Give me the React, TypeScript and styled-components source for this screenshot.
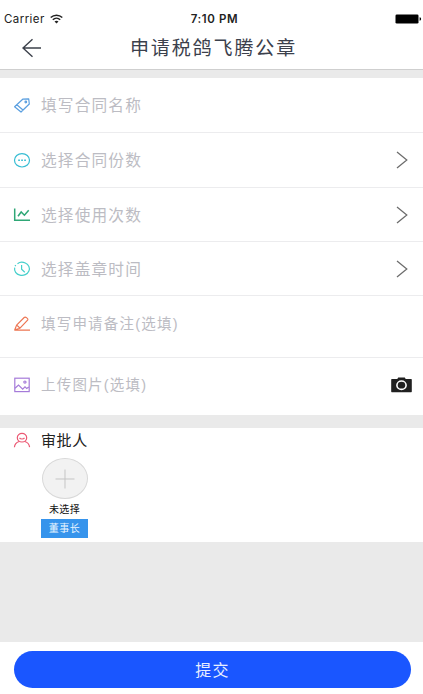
import React from "react";
import styled, { createGlobalStyle } from "styled-components";

const GlobalStyle = createGlobalStyle`
  * { box-sizing: border-box; }
  body { margin: 0; background: #eaeaea; font-family: "Liberation Sans", "Noto Sans CJK SC", sans-serif; }
`;

const Screen = styled.main`
  display: flex;
  flex-direction: column;
  width: 100%;
  height: 694px;
  overflow: hidden;
  background: #eaeaea;
`;

const Header = styled.header`
  height: 70px;
  flex: none;
  background: #fff;
  border-bottom: 1px solid #cfcfcf;
`;

const StatusBar = styled.div`
  display: grid;
  grid-template-columns: 1fr auto 1fr;
  align-items: center;
  height: 28px;
  padding: 9px 1px 0 4px;
  font-family: Inter, sans-serif;
  font-size: 11.5px;
  line-height: 18px;
  color: #222;
`;

const Carrier = styled.div`
  display: flex;
  align-items: center;
  gap: 5px;
  letter-spacing: 0.42px;
`;

const Clock = styled.div`
  font-weight: 600;
  letter-spacing: 0.6px;
  padding-left: 3px;
`;

const Battery = styled.svg`
  justify-self: end;
`;

const NavBar = styled.div`
  display: grid;
  grid-template-columns: 64px 1fr 64px;
  align-items: center;
  height: 40px;
`;

const BackButton = styled.button`
  display: flex;
  padding: 0 0 0 22px;
  border: 0;
  background: none;
`;

const Title = styled.h1`
  margin: 0;
  text-align: center;
  font-size: 19px;
  font-weight: 400;
  line-height: 28px;
  letter-spacing: 1.9px;
  padding: 1px 0 0 4px;
  color: #3b404c;
  white-space: nowrap;
`;

const FormCard = styled.section`
  flex: none;
  margin-top: 8px;
  background: #fff;
`;

const Row = styled.div<{ $height: number; $raise?: number }>`
  display: flex;
  align-items: center;
  height: ${(p) => p.$height}px;
  padding: 0 11px ${(p) => p.$raise ?? 0}px 14px;
  border-bottom: 1px solid #ececee;
  &:last-child { border-bottom: 0; }
`;

const Icon = styled.svg`
  flex: none;
  width: 16px;
  height: 16px;
  fill: none;
  stroke: currentColor;
  stroke-width: 1.2;
  overflow: visible;
`;

const Label = styled.span<{ $compact?: boolean }>`
  flex: 1;
  margin-left: 11px;
  padding-top: ${(p) => (p.$compact ? 0 : 2)}px;
  font-size: ${(p) => (p.$compact ? 14.5 : 15.7)}px;
  letter-spacing: ${(p) => (p.$compact ? 1.2 : 1.15)}px;
  line-height: 24px;
  color: #bcbcc3;
`;

const Chevron = styled.svg`
  margin-right: 4px;
  fill: none;
  stroke: #6c6c6c;
  stroke-width: 1.25;
`;

const ApproverCard = styled.section`
  flex: none;
  height: 114px;
  margin-top: 13px;
  padding-left: 14px;
  background: #fff;
`;

const ApproverHeading = styled.div`
  display: flex;
  align-items: center;
  height: 24px;
  gap: 11px;
  font-size: 15px;
  line-height: 22px;
  letter-spacing: 0.6px;
  color: #222;
`;

const ApproverTitle = styled.span`
  padding-top: 1px;
`;

const Approver = styled.div`
  display: flex;
  flex-direction: column;
  align-items: center;
  width: 47px;
  margin: 6px 0 0 27px;
`;

const AddButton = styled.button`
  display: flex;
  align-items: center;
  justify-content: center;
  width: 46px;
  height: 41px;
  padding: 0;
  border: 1px solid #d8d8d8;
  border-radius: 50%;
  background: #f2f2f2;
`;

const Status = styled.div`
  height: 20px;
  font-size: 10px;
  line-height: 21px;
  letter-spacing: 0.3px;
  color: #111;
`;

const Role = styled.div`
  width: 47px;
  height: 19px;
  padding-top: 1px;
  font-size: 10px;
  line-height: 18px;
  letter-spacing: 0.5px;
  text-align: center;
  color: #e8f4ff;
  background: #3694ec;
`;

const Footer = styled.footer`
  height: 52px;
  flex: none;
  margin-top: auto;
  padding: 9px 12px 0 14px;
  background: #fff;
`;

const Submit = styled.button`
  display: block;
  width: 100%;
  height: 37px;
  padding: 0 0 2px;
  border: 0;
  border-radius: 19px;
  background: #1a56ff;
  color: #e9efff;
  font-family: inherit;
  font-size: 16px;
  letter-spacing: 1.2px;
`;

const TagIcon = () => (
  <Icon viewBox="0 0 16 16" color="#5a9fe0">
    <path d="M.6 9.8 8.7 2.2 14.7 1.8 15.3 7 7 15Z M2.8 7.7 9 13" strokeLinejoin="round" />
    <circle cx="11.8" cy="5" r=".8" />
  </Icon>
);

const DotsIcon = () => (
  <Icon viewBox="0 0 16 16" color="#36bdd3">
    <ellipse cx="8" cy="8.3" rx="7.5" ry="6.7" />
    <path d="M4.2 8.3h1.7M7.2 8.3h1.7M10.2 8.3h1.7" strokeWidth="1.6" />
  </Icon>
);

const ChartIcon = () => (
  <Icon viewBox="0 0 16 16" color="#2fa776">
    <path d="M.7 1.5v11.8H16" strokeWidth="1.5" />
    <path d="M4 9.3 7.2 5l3.2 3.2 4.3-5" strokeWidth="1.5" />
  </Icon>
);

const ClockIcon = () => (
  <Icon viewBox="0 0 16 16" color="#45cfcb">
    <path d="M3.5 2.7C5.7 1 8.8.9 11.3 2c3.4 1.5 5 5 3.6 8-1.4 3.4-5.3 5-9 4.1C2.2 13.3-.1 10 .7 6.7M1 5.2l.8-1.1" />
    <path d="M7.6 4v4.3l3.2 2.9" />
  </Icon>
);

const PencilIcon = () => (
  <Icon viewBox="0 0 16 16" color="#ed7552">
    <path d="M.3 14.2H16M.8 13.8l1.8-4.7L10.2 1.5c1.2-1.1 4.6 1.2 3.4 2.6L6 12.2Z M2.8 9.1l3 2.9" strokeLinejoin="round" />
  </Icon>
);

const PictureIcon = () => (
  <Icon viewBox="0 0 16 16" color="#a57bd9">
    <rect x=".8" y="1.2" width="14.4" height="13.4" />
    <path d="m1 11.3 3.5-3.2 4.2 4 2.3-2.2 1.7 1.5 2.1-1.5" />
    <circle cx="10.9" cy="5.1" r="1.1" />
  </Icon>
);

const PersonIcon = () => (
  <Icon viewBox="0 0 16 16" color="#eb5873">
    <ellipse cx="8" cy="5.7" rx="4.7" ry="4.3" />
    <path d="M5.5 5.8c1.1 1.6 3.9 1.6 5 0M.4 15.2c.3-3.1 2.2-4.9 4.7-5.7M10.9 9.5c2.7.8 4.3 2.8 4.7 5.7" />
  </Icon>
);

const CameraIcon = () => (
  <svg width="21" height="16" viewBox="0 0 21 16">
    <path d="M.8 2.1h5.5L7.2.6h6.6l.9 1.5h5.5c.4 0 .6.3.6.6v11.9c0 .4-.2.6-.6.6H.8c-.4 0-.6-.2-.6-.6V2.7c0-.3.2-.6.6-.6Z" fill="#202020" />
    <ellipse cx="10.5" cy="8.2" rx="4.6" ry="4.2" fill="none" stroke="#fff" strokeWidth="1.6" />
  </svg>
);

const Arrow = () => (
  <Chevron width="12" height="18" viewBox="0 0 12 18">
    <path d="m1 1 9.8 8L1 17" />
  </Chevron>
);

const rows = [
  { label: "填写合同名称", height: 55, icon: <TagIcon /> },
  { label: "选择合同份数", height: 55, icon: <DotsIcon />, action: <Arrow /> },
  { label: "选择使用次数", height: 54, icon: <ChartIcon />, action: <Arrow /> },
  { label: "选择盖章时间", height: 54, icon: <ClockIcon />, action: <Arrow /> },
  { label: "填写申请备注(选填)", height: 62, icon: <PencilIcon />, compact: true, raise: 6 },
  { label: "上传图片(选填)", height: 57, icon: <PictureIcon />, action: <CameraIcon />, compact: true, raise: 4 },
];

export default function App() {
  return (
    <Screen>
      <GlobalStyle />
      <Header>
        <StatusBar>
          <Carrier>
            Carrier
            <svg width="13" height="10" viewBox="0 0 13 10" fill="none" stroke="#222" strokeWidth="1.5">
              <path d="M.7 3.5C4 .4 9 .4 12.3 3.5M2.8 5.7c2.1-2 5.3-2 7.4 0" />
              <path d="m6.5 9.5-2-2c1.2-1 2.8-1 4 0Z" fill="#222" stroke="none" />
            </svg>
          </Carrier>
          <Clock>7:10 PM</Clock>
          <Battery width="27" height="10" viewBox="0 0 27 10">
            <rect x=".5" y=".5" width="23" height="9" rx="1.3" />
            <path d="M24.6 3.3c2 .3 2 3.1 0 3.4Z" />
          </Battery>
        </StatusBar>
        <NavBar>
          <BackButton aria-label="返回">
            <svg width="20" height="20" viewBox="0 0 20 20" fill="none" stroke="#3c414b" strokeWidth="1.4">
              <path d="M19 10H1M10.5 1.2 1 10l9.5 8.8" />
            </svg>
          </BackButton>
          <Title>申请税鸽飞腾公章</Title>
        </NavBar>
      </Header>
      <FormCard>
        {rows.map((row) => (
          <Row key={row.label} $height={row.height} $raise={row.raise}>
            {row.icon}
            <Label $compact={row.compact}>{row.label}</Label>
            {row.action}
          </Row>
        ))}
      </FormCard>
      <ApproverCard>
        <ApproverHeading>
          <PersonIcon />
          <ApproverTitle>审批人</ApproverTitle>
        </ApproverHeading>
        <Approver>
          <AddButton aria-label="添加审批人">
            <svg width="20" height="20" viewBox="0 0 20 20" stroke="#c5c5c5">
              <path d="M10 .5v19M.5 10h19" />
            </svg>
          </AddButton>
          <Status>未选择</Status>
          <Role>董事长</Role>
        </Approver>
      </ApproverCard>
      <Footer>
        <Submit>提交</Submit>
      </Footer>
    </Screen>
  );
}
